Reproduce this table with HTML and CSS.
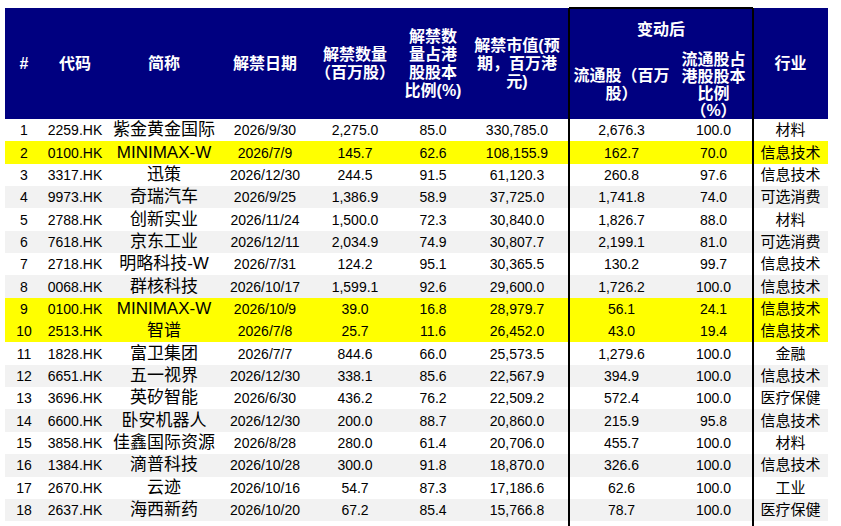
FILE: index.html
```html
<!DOCTYPE html>
<html lang="zh-CN">
<head>
<meta charset="utf-8">
<title>港股解禁</title>
<link rel="stylesheet" href="styles.css">
</head>
<body>
<table class="tbl">
  <colgroup>
    <col class="w1"><col class="w2"><col class="w3"><col class="w4"><col class="w5">
    <col class="w6"><col class="w7"><col class="w8"><col class="w9"><col class="w10">
  </colgroup>
  <thead>
    <tr class="hr1">
      <th rowspan="2">#</th>
      <th rowspan="2">代码</th>
      <th rowspan="2">简称</th>
      <th rowspan="2">解禁日期</th>
      <th rowspan="2">解禁数量<br>（百万股）</th>
      <th rowspan="2">解禁数<br>量占港<br>股股本<br>比例(%)</th>
      <th rowspan="2" class="lb">解禁市值(预<br>期，百万港<br>元)</th>
      <th colspan="2" class="box">变动后</th>
      <th rowspan="2" class="rb">行业</th>
    </tr>
    <tr class="hr2">
      <th class="l">流通股（百万<br>股）</th>
      <th class="r">流通股占<br>港股股本<br>比例<br>（%）</th>
    </tr>
  </thead>
  <tbody>
    <tr><td>1</td><td>2259.HK</td><td class="nm">紫金黄金国际</td><td>2026/9/30</td><td>2,275.0</td><td>85.0</td><td class="lb">330,785.0</td><td class="l">2,676.3</td><td class="r">100.0</td><td class="ind rb">材料</td></tr>
    <tr class="hl"><td>2</td><td>0100.HK</td><td class="nm">MINIMAX-W</td><td>2026/7/9</td><td>145.7</td><td>62.6</td><td class="lb">108,155.9</td><td class="l">162.7</td><td class="r">70.0</td><td class="ind rb">信息技术</td></tr>
    <tr><td>3</td><td>3317.HK</td><td class="nm">迅策</td><td>2026/12/30</td><td>244.5</td><td>91.5</td><td class="lb">61,120.3</td><td class="l">260.8</td><td class="r">97.6</td><td class="ind rb">信息技术</td></tr>
    <tr class="g"><td>4</td><td>9973.HK</td><td class="nm">奇瑞汽车</td><td>2026/9/25</td><td>1,386.9</td><td>58.9</td><td class="lb">37,725.0</td><td class="l">1,741.8</td><td class="r">74.0</td><td class="ind rb">可选消费</td></tr>
    <tr><td>5</td><td>2788.HK</td><td class="nm">创新实业</td><td>2026/11/24</td><td>1,500.0</td><td>72.3</td><td class="lb">30,840.0</td><td class="l">1,826.7</td><td class="r">88.0</td><td class="ind rb">材料</td></tr>
    <tr class="g"><td>6</td><td>7618.HK</td><td class="nm">京东工业</td><td>2026/12/11</td><td>2,034.9</td><td>74.9</td><td class="lb">30,807.7</td><td class="l">2,199.1</td><td class="r">81.0</td><td class="ind rb">可选消费</td></tr>
    <tr><td>7</td><td>2718.HK</td><td class="nm">明略科技-W</td><td>2026/7/31</td><td>124.2</td><td>95.1</td><td class="lb">30,365.5</td><td class="l">130.2</td><td class="r">99.7</td><td class="ind rb">信息技术</td></tr>
    <tr class="g"><td>8</td><td>0068.HK</td><td class="nm">群核科技</td><td>2026/10/17</td><td>1,599.1</td><td>92.6</td><td class="lb">29,600.0</td><td class="l">1,726.2</td><td class="r">100.0</td><td class="ind rb">信息技术</td></tr>
    <tr class="hl"><td>9</td><td>0100.HK</td><td class="nm">MINIMAX-W</td><td>2026/10/9</td><td>39.0</td><td>16.8</td><td class="lb">28,979.7</td><td class="l">56.1</td><td class="r">24.1</td><td class="ind rb">信息技术</td></tr>
    <tr class="hl"><td>10</td><td>2513.HK</td><td class="nm">智谱</td><td>2026/7/8</td><td>25.7</td><td>11.6</td><td class="lb">26,452.0</td><td class="l">43.0</td><td class="r">19.4</td><td class="ind rb">信息技术</td></tr>
    <tr><td>11</td><td>1828.HK</td><td class="nm">富卫集团</td><td>2026/7/7</td><td>844.6</td><td>66.0</td><td class="lb">25,573.5</td><td class="l">1,279.6</td><td class="r">100.0</td><td class="ind rb">金融</td></tr>
    <tr class="g"><td>12</td><td>6651.HK</td><td class="nm">五一视界</td><td>2026/12/30</td><td>338.1</td><td>85.6</td><td class="lb">22,567.9</td><td class="l">394.9</td><td class="r">100.0</td><td class="ind rb">信息技术</td></tr>
    <tr><td>13</td><td>3696.HK</td><td class="nm">英矽智能</td><td>2026/6/30</td><td>436.2</td><td>76.2</td><td class="lb">22,509.2</td><td class="l">572.4</td><td class="r">100.0</td><td class="ind rb">医疗保健</td></tr>
    <tr class="g"><td>14</td><td>6600.HK</td><td class="nm">卧安机器人</td><td>2026/12/30</td><td>200.0</td><td>88.7</td><td class="lb">20,860.0</td><td class="l">215.9</td><td class="r">95.8</td><td class="ind rb">信息技术</td></tr>
    <tr><td>15</td><td>3858.HK</td><td class="nm">佳鑫国际资源</td><td>2026/8/28</td><td>280.0</td><td>61.4</td><td class="lb">20,706.0</td><td class="l">455.7</td><td class="r">100.0</td><td class="ind rb">材料</td></tr>
    <tr class="g"><td>16</td><td>1384.HK</td><td class="nm">滴普科技</td><td>2026/10/28</td><td>300.0</td><td>91.8</td><td class="lb">18,870.0</td><td class="l">326.6</td><td class="r">100.0</td><td class="ind rb">信息技术</td></tr>
    <tr><td>17</td><td>2670.HK</td><td class="nm">云迹</td><td>2026/10/16</td><td>54.7</td><td>87.3</td><td class="lb">17,186.6</td><td class="l">62.6</td><td class="r">100.0</td><td class="ind rb">工业</td></tr>
    <tr class="g"><td>18</td><td>2637.HK</td><td class="nm">海西新药</td><td>2026/10/20</td><td>67.2</td><td>85.4</td><td class="lb">15,766.8</td><td class="l">78.7</td><td class="r">100.0</td><td class="ind rb">医疗保健</td></tr>
    <tr class="filler"><td></td><td></td><td></td><td></td><td></td><td></td><td class="lb"></td><td class="l"></td><td class="r"></td><td class="rb"></td></tr>
  </tbody>
</table>
</body>
</html>
```

FILE: styles.css
```css
html, body {
  margin: 0;
  padding: 0;
  background: #ffffff;
}

.tbl {
  margin: 8px 0 0 5px;
  border-collapse: collapse;
  border-spacing: 0;
  table-layout: fixed;
  width: 823px;
  font-family: "Liberation Sans", "Noto Sans CJK SC", sans-serif;
  color: #000;
}

.w1 { width: 38px; }
.w2 { width: 64px; }
.w3 { width: 114px; }
.w4 { width: 88px; }
.w5 { width: 92px; }
.w6 { width: 64px; }
.w7 { width: 104px; }
.w8 { width: 105px; }
.w9 { width: 79px; }
.w10 { width: 75px; }

th, td {
  padding: 0;
  text-align: center;
  vertical-align: middle;
  white-space: nowrap;
}

thead th {
  background: #000080;
  color: #ffffff;
  font-size: 16px;
  font-weight: bold;
  line-height: 18px;
}

.hr1 { height: 43px; }
.hr2 { height: 67px; }

.hr2 th.r { line-height: 17px; }

tbody td {
  font-size: 14px;
  height: 22.35px;
  line-height: 16px;
  background: #ffffff;
}

tbody tr.g td { background: #f2f2f2; }
tbody tr.hl td { background: #ffff00; }

tbody td.nm { font-size: 17px; }
tbody td.ind { font-size: 15px; }

tbody tr.filler td { height: 12px; background: #ffffff; }
tbody tr.filler td:last-child { background: #ffffff; }

/* black frame around the "变动后" block */
.lb { box-shadow: inset -1px 0 0 #000; }
.l { box-shadow: inset 1px 0 0 #000; }
.r { box-shadow: inset -1px 0 0 #000; }
.rb { box-shadow: inset 1px 0 0 #000; }
thead th.box {
  box-shadow: inset 1px 0 0 #000, inset -1px 0 0 #000, inset 0 1px 0 #000, 0 -1px 0 #000;
}
```
